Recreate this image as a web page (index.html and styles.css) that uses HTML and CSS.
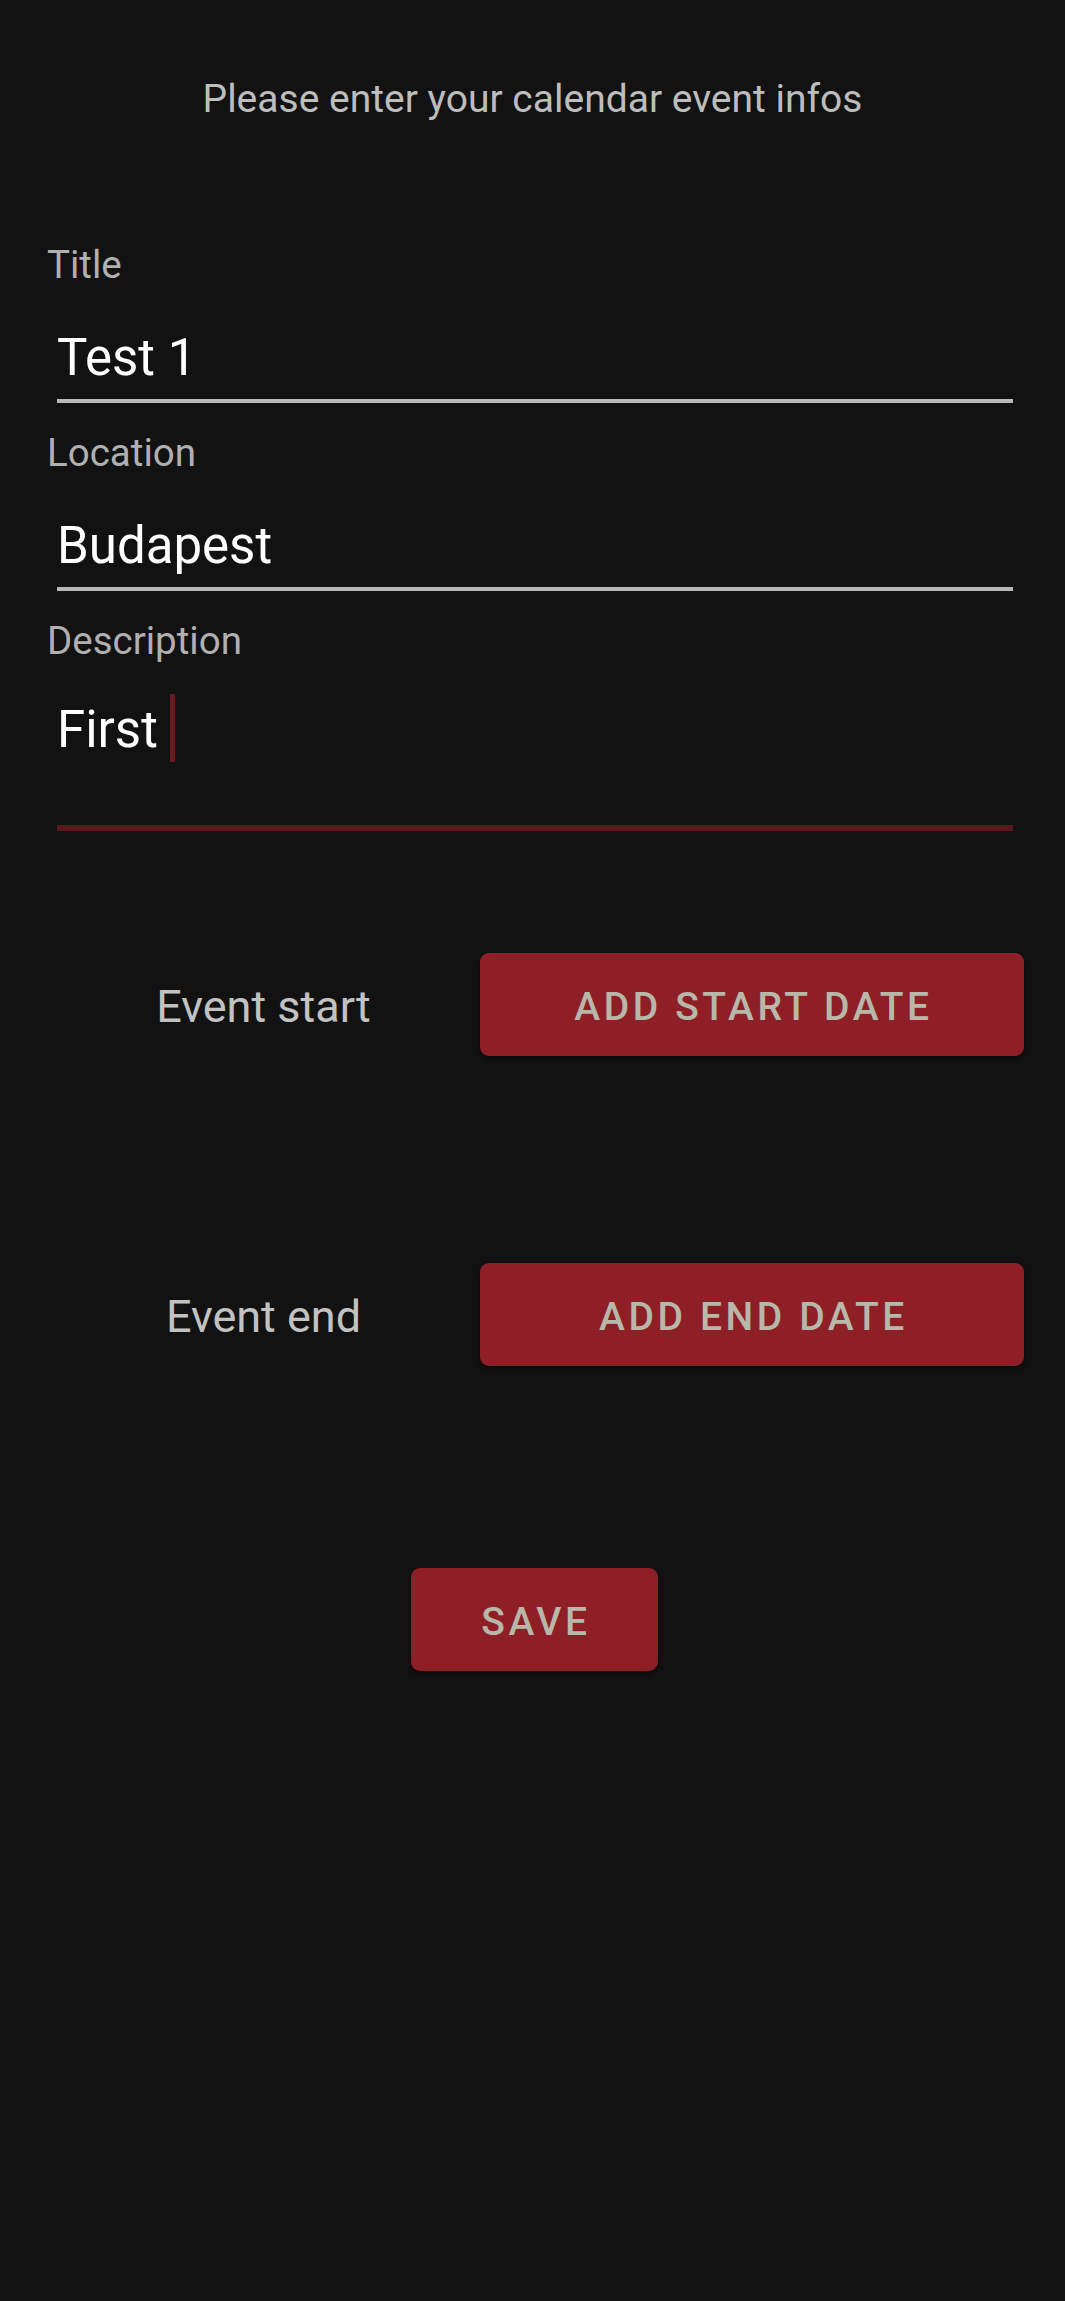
FILE: index.html
```html
<!DOCTYPE html>
<html lang="en">
<head>
<meta charset="utf-8">
<title>Calendar event</title>
<link rel="stylesheet" href="styles.css">
</head>
<body>
<main class="screen">
  <h1 class="intro">Please enter your calendar event infos</h1>

  <section class="form">
    <div class="field">
      <div class="field-label">Title</div>
      <div class="field-input">Test 1</div>
    </div>
    <div class="field">
      <div class="field-label">Location</div>
      <div class="field-input">Budapest</div>
    </div>
    <div class="field">
      <div class="field-label">Description</div>
      <div class="field-input field-input--focused">First<span class="caret"></span></div>
    </div>
  </section>

  <section class="dates">
    <div class="event-row">
      <div class="event-label">Event start</div>
      <button class="btn btn--wide" type="button">Add start date</button>
    </div>
    <div class="event-row">
      <div class="event-label">Event end</div>
      <button class="btn btn--wide" type="button">Add end date</button>
    </div>
    <div class="save-row">
      <button class="btn btn--save" type="button">Save</button>
    </div>
  </section>
</main>
</body>
</html>
```

FILE: styles.css
```css
html {
  background: #121212;
}

body {
  margin: 0;
  background: #121212;
  font-family: Roboto, "Noto Sans", "Liberation Sans", sans-serif;
  min-height: 2301px;
}

.screen {
  display: flex;
  flex-direction: column;
  padding-top: 76px;
}

.intro {
  margin: 0;
  font-size: 39px;
  line-height: 46px;
  font-weight: 400;
  color: #bdbdbd;
  text-align: center;
}

.form {
  display: flex;
  flex-direction: column;
  gap: 27px;
  margin-top: 120px;
  padding: 0 52px 0 47px;
}

.field-label {
  font-size: 38.5px;
  line-height: 46px;
  color: #b0b0b0;
}

.field-input {
  margin-left: 10px;
  padding: 40px 0 11px;
  font-size: 51px;
  line-height: 60px;
  color: #ffffff;
  border-bottom: 4px solid #b8b8b8;
}

.field-input--focused {
  padding: 36px 0 63px;
  border-bottom: 6px solid #5a181c;
}

.caret {
  display: inline-block;
  width: 5px;
  height: 68px;
  margin-left: 12px;
  margin-top: -8px;
  vertical-align: -15px;
  background: #6a1b20;
}

.dates {
  display: flex;
  flex-direction: column;
  gap: 207px;
  margin-top: 122px;
}

.event-row {
  display: flex;
  align-items: center;
  padding: 0 41px 0 47px;
}

.event-label {
  flex: 1;
  text-align: center;
  font-size: 45px;
  line-height: 54px;
  padding-top: 5px;
  color: #c2c2c2;
}

.btn {
  height: 103px;
  border: none;
  border-radius: 9px;
  background: #8f1f27;
  color: #b7b8aa;
  font-family: Roboto, "Noto Sans", "Liberation Sans", sans-serif;
  font-size: 39px;
  font-weight: 500;
  letter-spacing: 3.6px;
  text-transform: uppercase;
  box-shadow: 0 3px 4px rgba(0, 0, 0, 0.45);
  padding: 4px 0 0 3px;
}

.btn--wide {
  width: 544px;
}

.save-row {
  display: flex;
  justify-content: center;
  margin-top: -5px;
  padding-left: 4px;
}

.btn--save {
  width: 247px;
}
```
